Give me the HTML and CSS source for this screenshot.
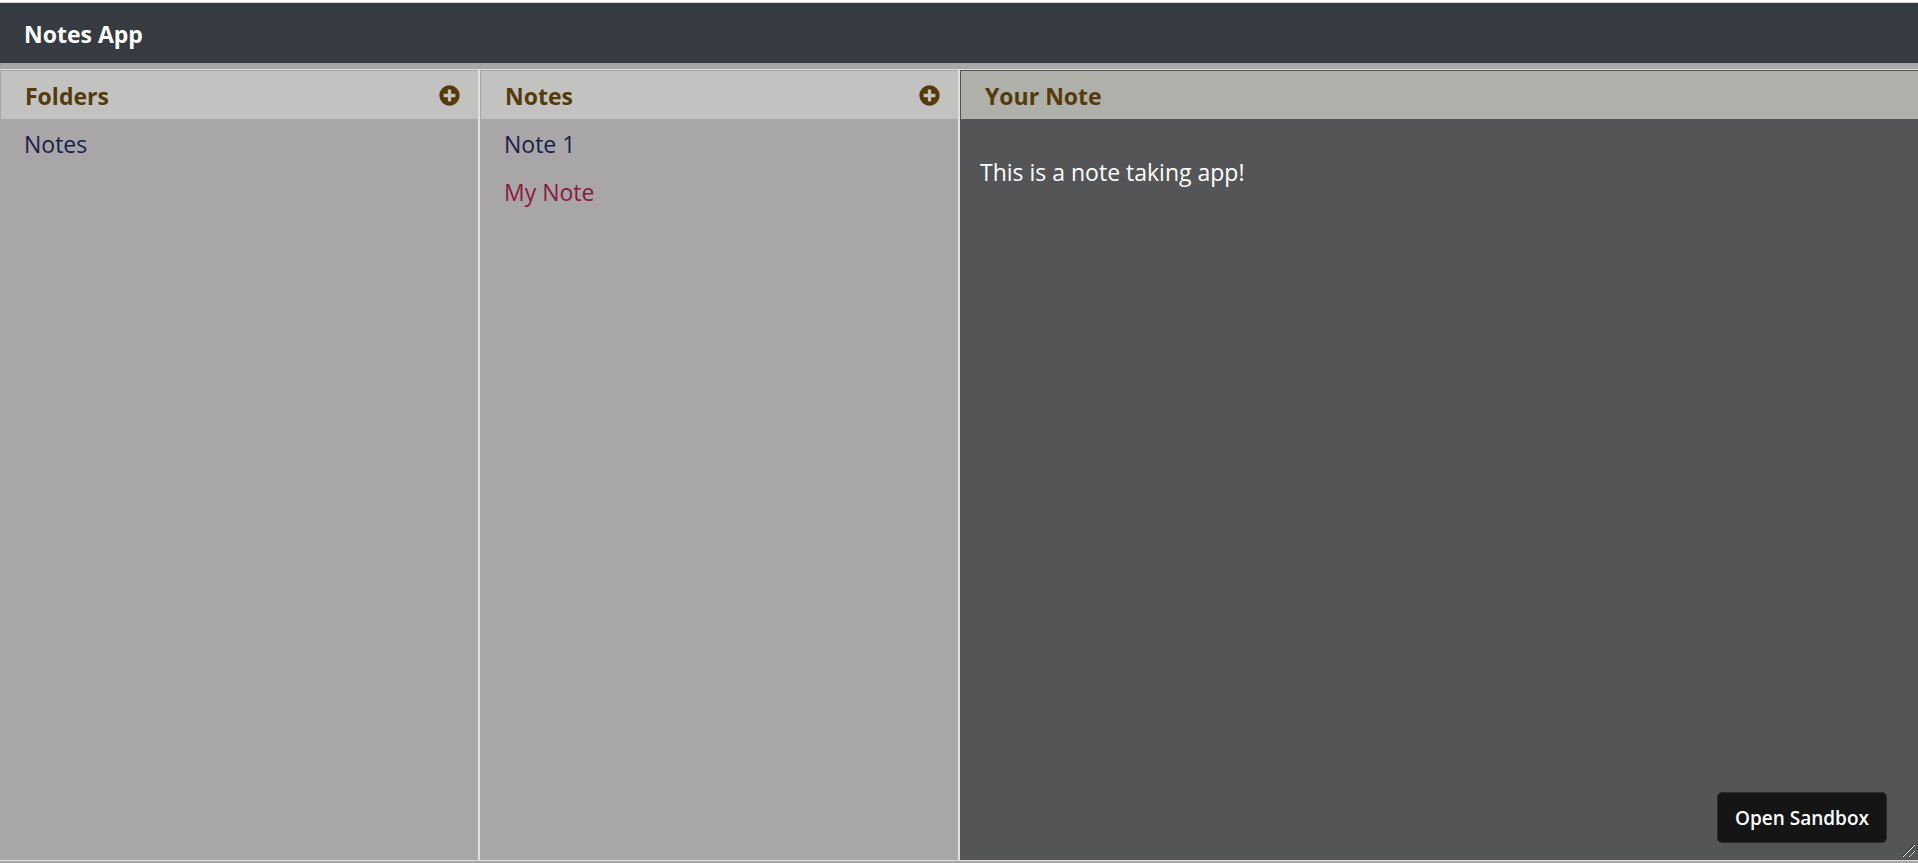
FILE: index.html
```
<!DOCTYPE html>
<html lang="en">
<head>
<meta charset="utf-8">
<title>Notes App</title>
<link rel="stylesheet" href="styles.css">
</head>
<body>
<header class="navbar"><h1 class="brand">Notes App</h1></header>
<main class="columns">
  <section class="panel">
    <div class="panel-head">
      <h2 class="panel-title">Folders</h2>
      <button class="add" type="button" aria-label="Add folder">
        <svg viewBox="0 0 512 512" aria-hidden="true"><path fill="currentColor" d="M256 8a248 248 0 1 0 0 496a248 248 0 1 0 0-496zm144 276c0 7-5 12-12 12h-92v92c0 7-5 12-12 12h-56c-7 0-12-5-12-12v-92h-92c-7 0-12-5-12-12v-56c0-7 5-12 12-12h92v-92c0-7 5-12 12-12h56c7 0 12 5 12 12v92h92c7 0 12 5 12 12z"/></svg>
      </button>
    </div>
    <ul class="list">
      <li><a class="item" href="#notes">Notes</a></li>
    </ul>
  </section>
  <section class="panel">
    <div class="panel-head">
      <h2 class="panel-title">Notes</h2>
      <button class="add" type="button" aria-label="Add note">
        <svg viewBox="0 0 512 512" aria-hidden="true"><path fill="currentColor" d="M256 8a248 248 0 1 0 0 496a248 248 0 1 0 0-496zm144 276c0 7-5 12-12 12h-92v92c0 7-5 12-12 12h-56c-7 0-12-5-12-12v-92h-92c-7 0-12-5-12-12v-56c0-7 5-12 12-12h92v-92c0-7 5-12 12-12h56c7 0 12 5 12 12v92h92c7 0 12 5 12 12z"/></svg>
      </button>
    </div>
    <ul class="list">
      <li><a class="item" href="#note-1">Note 1</a></li>
      <li><a class="item item-active" href="#my-note">My Note</a></li>
    </ul>
  </section>
  <section class="panel panel-note">
    <div class="panel-head">
      <h2 class="panel-title"><label for="note">Your Note</label></h2>
    </div>
    <textarea class="note" id="note" spellcheck="false">This is a note taking app!</textarea>
    <svg class="grip" viewBox="0 0 16 16" aria-hidden="true">
      <path stroke="#333" d="M2 13L13 1M8 13L13 8"/>
      <path stroke="#ddd" d="M2 14L14 2M8 14L14 8"/>
    </svg>
  </section>
</main>
<button class="sandbox" type="button">Open Sandbox</button>
</body>
</html>
```
FILE: styles.css
```
* {
  box-sizing: border-box;
}

body {
  margin: 0;
  height: 100vh;
  padding: 2px 0;
  display: flex;
  flex-direction: column;
  background: linear-gradient(#fff 2px, #a8a6a7 2px);
  font-family: "Segoe UI", "Open Sans", sans-serif;
  font-size: 23px;
  line-height: 32px;
}

h1,
h2 {
  margin: 0;
  font-size: inherit;
  font-weight: 700;
}

.navbar {
  padding: 15px 24px 13px;
  border-top: 1px solid #d5d6d8;
  background: #363a41;
  color: #fff;
}

.columns {
  flex: 1;
  display: grid;
  grid-template-columns: 1fr 1fr calc(50% - 1px);
  margin-top: 6px;
  border: solid #e0dfe0;
  border-width: 1px 0;
  min-height: 0;
}

.panel {
  position: relative;
  display: flex;
  flex-direction: column;
  min-width: 0;
  border-right: 2px solid #e0dfe0;
  background: #a8a6a7;
}

.panel-note {
  border-right: 0;
  background: #545556;
}

.panel-head {
  display: flex;
  align-items: center;
  justify-content: space-between;
  margin: 1px 0 0 1px;
  padding: 9px 18px 7px 24px;
  background: #c2c2c0;
  color: #553b09;
}

.panel-note .panel-head {
  background: #aeb0aa;
}

.add {
  display: flex;
  padding: 0 0 2px;
  border: 0;
  background: none;
  color: inherit;
}

.add svg {
  width: 21px;
  height: 21px;
}

.list {
  margin: 0;
  padding: 1px 0;
  list-style: none;
}

.item {
  display: block;
  padding: 8px 24px;
  color: #17204f;
  text-decoration: none;
}

.item-active {
  color: #8c1a41;
}

.note {
  flex: 1;
  width: 100%;
  padding: 37px 20px;
  border: 0;
  outline: 0;
  background: #545556;
  color: #fff;
  font: inherit;
  resize: both;
}

.note::-webkit-resizer {
  background: transparent;
}

.grip {
  position: absolute;
  right: 1px;
  bottom: 1px;
  width: 16px;
  height: 16px;
  pointer-events: none;
}

.sandbox {
  position: fixed;
  right: 31px;
  bottom: 20px;
  padding: 9px 17px 8px;
  border: 1px solid #2b2b2b;
  border-radius: 5px;
  background: #151515;
  color: #fff;
  font: 600 19px/32px "Segoe UI", "Open Sans", sans-serif;
}
```
